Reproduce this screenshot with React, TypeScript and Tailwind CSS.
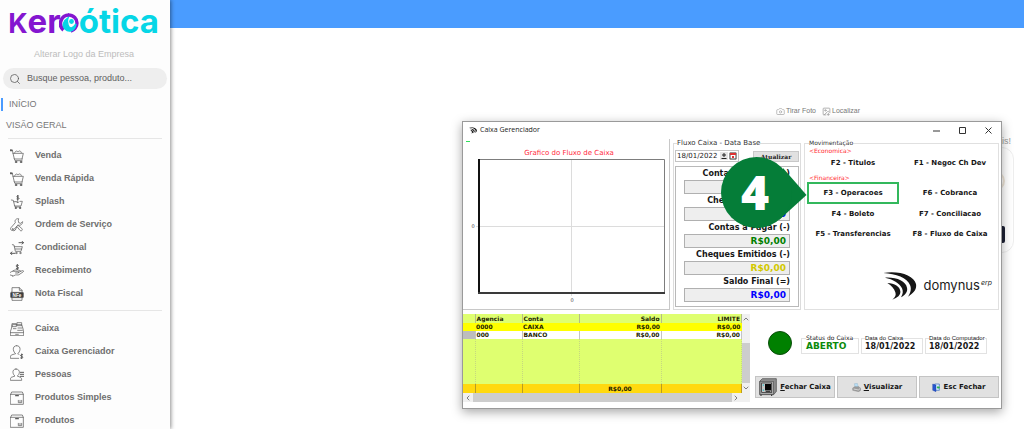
import React from 'react';
import { Camera, ChevronDown, ChevronLeft, ChevronRight, ChevronUp, ImageDown, Search } from 'lucide-react';

type IconProps = { children: React.ReactNode };

const LineIcon: React.FC<IconProps> = ({ children }) => (
    <svg viewBox="0 0 42 42" className="h-[14px] w-[14px] shrink-0" fill="none" stroke="#5c5c5c" strokeWidth="2.2" strokeLinecap="round" strokeLinejoin="round" aria-hidden="true">
        {children}
    </svg>
);

const CartIcon = () => (
    <LineIcon>
        <path d="M1 3l6 1 6 26h24M9 13h31l-4 17M13 30l2 5h21" />
        <path d="M14 12c1-6 7-8 10-3 3-5 9-4 10 2" />
        <circle cx="18" cy="39" r="2.4" fill="#4d4d4d" />
        <circle cx="33" cy="39" r="2.4" fill="#4d4d4d" />
        <path d="M1 4h5" strokeWidth="5" />
    </LineIcon>
);

const SplashIcon = () => (
    <LineIcon>
        <path d="M4 15l6 1 4 17h19l4-14h-6M11 20h8M14 33l2 3h16" />
        <path d="M26 3c-6-2-8 4-2 5s4 6-3 4M23 1v14" strokeWidth="3" />
        <path d="M23 17v6M19 20l4 4 4-4" />
        <circle cx="17" cy="39" r="2" fill="#4d4d4d" />
        <circle cx="30" cy="39" r="2" fill="#4d4d4d" />
    </LineIcon>
);

const ToolsIcon = () => (
    <LineIcon>
        <path d="M25 2c-7-1-12 5-9 12L3 29c-4 5 2 11 7 7l14-15c8 3 14-3 14-10l-6 5-6-2-1-6z" />
        <path d="M24 22l11 9c5 5-1 10-5 6l-9-11M20 27l-4 9-5 3-3-3" />
        <circle cx="8" cy="33" r="1" />
    </LineIcon>
);

const ConditionalIcon = () => (
    <LineIcon>
        <path d="M7 11l5 1 4 19h17l4-14H13M16 24h19" />
        <path d="M27 5h13M36 1l5 4-5 4M15 37H2M6 33l-5 4 5 4" strokeWidth="3" />
        <circle cx="19" cy="36" r="2" />
        <circle cx="31" cy="36" r="2" />
    </LineIcon>
);

const ReceiptIcon = () => (
    <LineIcon>
        <path d="M25 4c-7-3-9 4-3 5s5 7-3 5M22 1v16" strokeWidth="3" />
        <path d="M1 25c7-6 11-2 16-2h8c3 0 2 4-1 4h-7M25 25l12-5c4-1 5 2 2 4L27 32c-3 2-7 0-11 1L8 37M1 33l7 2M9 20c9-4 17-3 23 1" />
    </LineIcon>
);

const NfeIcon = () => (
    <LineIcon>
        <path d="M6 15V2h22l8 8v5M28 2v8h8M6 33v7h30v-7" />
        <rect x="2" y="16" width="38" height="16" rx="2" fill="#3c3c3c" />
        <text x="21" y="29" textAnchor="middle" fill="#fff" stroke="none" fontSize="14" fontWeight="700" fontFamily="Liberation Sans, sans-serif">NFe</text>
    </LineIcon>
);

const RegisterIcon = () => (
    <LineIcon>
        <path d="M4 20L7 8h28l4 12 2 12H1zM1 32v9h40v-9M17 37h8" />
        <rect x="7" y="5" width="12" height="9" />
        <path d="M22 2h13v9H22zM10 20h8M24 18h12M23 25h14" />
    </LineIcon>
);

const ManagerIcon = () => (
    <LineIcon>
        <path d="M20 2c-7 0-11 5-10 12 1 6 4 10 7 12L4 30c-2 2-3 5-3 10h25M20 2c7 0 11 5 10 12-1 6-4 10-7 12l4 2" />
        <path d="M38 29c-6-2-9 4-3 5s4 7-3 5M35 27v15" strokeWidth="3" />
    </LineIcon>
);

const PeopleIcon = () => (
    <LineIcon>
        <path d="M18 3c-7 0-10 5-9 11 1 5 3 8 6 10L4 28c-2 1-3 4-3 9h34c0-5-1-8-4-9l-9-4c3-2 5-5 6-10 1-6-3-11-10-11z" />
        <path d="M31 13h10M31 19h10M31 25h10" strokeWidth="3" />
    </LineIcon>
);

const BoxIcon = () => (
    <LineIcon>
        <path d="M2 10h38v30H2zM2 10l3-7h32l3 7" />
        <path d="M17 14h8" strokeWidth="4" />
        <path d="M25 28v7h10v-7M30 28v5" />
    </LineIcon>
);

const SALES_ITEMS = [
    { label: 'Venda', icon: CartIcon },
    { label: 'Venda Rápida', icon: CartIcon },
    { label: 'Splash', icon: SplashIcon },
    { label: 'Ordem de Serviço', icon: ToolsIcon },
    { label: 'Condicional', icon: ConditionalIcon },
    { label: 'Recebimento', icon: ReceiptIcon },
    { label: 'Nota Fiscal', icon: NfeIcon },
];

const REGISTER_ITEMS = [
    { label: 'Caixa', icon: RegisterIcon },
    { label: 'Caixa Gerenciador', icon: ManagerIcon },
    { label: 'Pessoas', icon: PeopleIcon },
    { label: 'Produtos Simples', icon: BoxIcon },
    { label: 'Produtos', icon: BoxIcon },
];

const TOTALS = [
    { label: 'Contas Receber (+)', color: 'text-[#0000ff]' },
    { label: 'Cheques Caixa (+)', color: 'text-[#0000ff]' },
    { label: 'Contas a Pagar (-)', color: 'text-[#008000]' },
    { label: 'Cheques Emitidos (-)', color: 'text-[#d2c800]' },
    { label: 'Saldo Final (=)', color: 'text-[#0000ff]' },
];

const NavList: React.FC<{ items: typeof SALES_ITEMS }> = ({ items }) => (
    <ul>
        {items.map(({ label, icon: Icon }) => (
            <li key={label}>
                <a href="#" className="flex h-[23px] items-center gap-[11px] pl-[10px] text-[9px] font-bold text-[#6e6e6e]">
                    <Icon />
                    {label}
                </a>
            </li>
        ))}
    </ul>
);

const Logo = () => (
    <div className="flex h-[42px] items-baseline justify-center pr-[3px] font-['Inter',sans-serif] leading-[42px] font-bold">
        <span className="text-[27px] text-[#8416d0]">K</span>
        <span className="text-[33px] text-[#8416d0]">er</span>
        <svg viewBox="0 0 20 20" className="-ml-[2px] h-5 w-5" role="img" aria-label="o">
            <path d="M4.500 17A8.500 8.500 0 0 1 10 2" fill="none" stroke="#8416d0" strokeWidth="3.600" />
            <path d="M9 2c6 0 9 4 9 8 0 4-3 7.500-6 8" fill="none" stroke="#8416d0" strokeWidth="3.400" />
            <path d="M9 5C4 8 3 13 6 16c4 4 10 2 11-5-3 5-7 5-8 1-1-3-1-5 0-7z" fill="#06d6e6" stroke="#06d6e6" strokeWidth="1.500" />
            <circle cx="12.500" cy="8.500" r="2.400" fill="#06d6e6" />
        </svg>
        <span className="text-[33px] text-[#06d6e6]">ótica</span>
    </div>
);

const Sidebar = () => (
    <aside className="z-10 w-[170px] shrink-0 overflow-hidden bg-[#fdfdfd] shadow-[1px_0_4px_rgba(0,0,0,0.45)]">
        <Logo />
        <a href="#" className="mr-[2px] block pt-[7px] text-center text-[9px] leading-[10px] text-[#bcbcbc]">Alterar Logo da Empresa</a>
        <label className="mx-[3px] mt-[9px] flex h-[21px] items-center gap-[6px] rounded-full bg-[#eeeeee] pl-[6px]">
            <Search className="h-3 w-3 shrink-0 text-[#555]" strokeWidth={1.5} />
            <input type="text" aria-label="Busca" placeholder="Busque pessoa, produto..." className="w-full min-w-0 text-[9px] outline-none placeholder:text-[#606060]" />
        </label>
        <nav>
            <a href="#" className="mt-[9px] ml-px flex h-[13px] items-center border-l-2 border-[#4a9bff] pl-[6px] text-[9px] text-[#777]">INÍCIO</a>
            <a href="#" className="mt-[8px] flex h-[13px] items-center pl-[6px] text-[9px] text-[#777]">VISÃO GERAL</a>
            <hr className="mx-2 mt-[6px] mb-[5px] border-[#e6e6e6]" />
            <NavList items={SALES_ITEMS} />
            <hr className="mx-2 mt-[5px] mb-[6px] border-[#e6e6e6]" />
            <NavList items={REGISTER_ITEMS} />
        </nav>
    </aside>
);

const DomynusMark: React.FC<{ className: string }> = ({ className }) => (
    <svg viewBox="0 0 100 84" className={className} fill="#161616" aria-hidden="true">
        <path d="M0 3C46-5 92 10 98 36c3 16-8 28-24 38 8-12 11-24 6-35C72 18 38 5 0 3z" />
        <path d="M5 17c34-2 62 10 66 30 3 13-6 22-18 29 6-10 7-18 3-27C49 33 29 22 5 17z" />
        <path d="M12 33c22 1 38 11 39 25 1 12-8 19-24 25 9-8 12-14 9-22-4-12-11-20-24-28z" />
    </svg>
);

const TitleBar = () => (
    <div className="flex h-[17px] items-center pl-[6px] font-['Open_Sans',sans-serif] text-[7px] text-[#222]">
        <DomynusMark className="h-[7px] w-2" />
        <span className="ml-[3px] flex-1">Caixa Gerenciador</span>
        <button aria-label="Minimizar" className="flex w-[26px] justify-center">
            <svg className="h-[7px] w-[7px]" viewBox="0 0 7 7" stroke="#333"><path d="M0 4h7" /></svg>
        </button>
        <button aria-label="Maximizar" className="flex w-[26px] justify-center">
            <svg className="h-[7px] w-[7px]" viewBox="0 0 7 7" stroke="#333" fill="none"><path d="M.5.5h6v6h-6z" /></svg>
        </button>
        <button aria-label="Fechar" className="flex w-[26px] justify-center">
            <svg className="h-[7px] w-[7px]" viewBox="0 0 7 7" stroke="#333"><path d="M.5.5l6 6M6.500.5l-6 6" /></svg>
        </button>
    </div>
);

const CashFlowChart = () => (
    <div className="w-[207px] shrink-0 border-r border-b border-[#c8c8c8]">
        <svg viewBox="0 0 206 170" className="block w-full" fontFamily="DejaVu Sans, sans-serif">
            <path d="M3 2.500h4" stroke="#2fe05a" />
            <text x="106" y="16" fontSize="7" textAnchor="middle" fill="#ff2a3c">Grafico do Fluxo de Caixa</text>
            <path d="M108.500 21v136M13 87.500h188" stroke="#dcdcdc" />
            <path d="M16 20.500h185.500V153" stroke="#7d7d7d" fill="none" />
            <path d="M16 20v134" stroke="#111" strokeWidth="2" />
            <path d="M15 154h187" stroke="#3a3a3a" strokeWidth="2" />
            <text x="10" y="89" fontSize="5" textAnchor="middle" fill="#444">0</text>
            <text x="109" y="163" fontSize="5" textAnchor="middle" fill="#444">0</text>
        </svg>
    </div>
);

const BalancePanel = () => (
    <fieldset className="w-32 shrink-0 border border-[#dcdcdc] px-px pb-px">
        <legend className="ml-[2px] text-[7px] leading-[8px] whitespace-nowrap text-[#333]">Fluxo Caixa - Data Base</legend>
        <div className="flex items-center justify-between pt-[3px]">
            <div className="flex h-3 w-[64px] items-center border border-[#c4c4c4]">
                <input aria-label="Data base" defaultValue="18/01/2022" className="w-[44px] pl-px text-[7px] leading-[10px] text-[#222] outline-none" />
                <button aria-label="Alterar data" className="flex h-[8px] w-[8px] items-center justify-center bg-[#e4e4e4]">
                    <svg viewBox="0 0 8 8" className="h-2 w-2" stroke="#222"><path d="M4 1v4M2 3h4M1.500 6.500h5" /></svg>
                </button>
                <button aria-label="Abrir calendário" className="ml-px flex h-[8px] w-[8px] items-center justify-center bg-[#e4e4e4]">
                    <svg viewBox="0 0 8 8" className="h-2 w-2"><path d="M1 1h6v6H1z" fill="#fff" stroke="#444" /><path d="M1 1h6v2H1z" fill="#d33" /><path d="M3 4h2v2H3z" fill="#d33" /></svg>
                </button>
            </div>
            <button className="h-[11px] w-[46px] border border-[#c8c8c8] bg-[#e1e1e1] font-['DejaVu_Serif',serif] text-[6px] leading-[9px] font-bold text-[#222]">Atualizar</button>
        </div>
        <dl className="mt-1 border border-[#b9b9b9] pr-2 pb-1 pl-2 text-right font-bold">
            {TOTALS.map(({ label, color }) => (
                <React.Fragment key={label}>
                    <dt className="h-[13px] text-[8px] leading-[13px] whitespace-nowrap text-[#151515]">{label}</dt>
                    <dd className={`h-[14px] border border-[#b0b0b0] bg-[#eeeeee] pr-[3px] text-[9px] leading-[12px] ${color}`}>R$0,00</dd>
                </React.Fragment>
            ))}
        </dl>
    </fieldset>
);

const MovementPanel = () => (
    <fieldset className="mr-[2px] min-w-0 flex-1 border border-[#e0e0e0] pl-[2px]">
        <legend className="ml-[2px] text-[6px] leading-[8px] text-[#333]">Movimentação</legend>
        <p className="pl-[2px] text-[6px] leading-[7px] text-[#ff1f2f]">&lt;Economica&gt;</p>
        <div className="grid grid-cols-[92px_1fr] text-[7px] font-bold text-[#151515]">
            <button className="h-[18px]">F2 - Titulos</button>
            <button className="h-[18px] pl-[3px]">F1 - Negoc Ch Dev</button>
        </div>
        <p className="pt-[2px] pl-[2px] text-[6px] leading-[8px] text-[#ff1f2f]">&lt;Financeira&gt;</p>
        <div className="grid grid-cols-[92px_1fr] text-[7px] font-bold whitespace-nowrap text-[#151515]">
            <button className="h-[22px] border-2 border-[#33b85c]">F3 - Operacoes</button>
            <button className="h-[22px] pl-[3px]">F6 - Cobranca</button>
            <button className="h-5">F4 - Boleto</button>
            <button className="h-5 pl-[3px]">F7 - Conciliacao</button>
            <button className="h-5">F5 - Transferencias</button>
            <button className="h-5 pl-[3px]">F8 - Fluxo de Caixa</button>
        </div>
        <div className="flex items-center justify-end pt-[28px] pr-[6px] pb-2 font-['Inter',sans-serif] text-[#1b1b1b]">
            <DomynusMark className="h-[28px] w-[34px]" />
            <span className="ml-[6px] text-[13px]">domynus</span>
            <sup className="ml-px text-[7px] italic">erp</sup>
        </div>
    </fieldset>
);

const AccountsTable = () => (
    <div className="grid w-[287px] shrink-0 grid-cols-[1fr_8px] bg-[#f0f0f0]">
        <table className="w-full table-fixed border-collapse bg-[#dfff70] text-[6px] leading-[8px] font-bold text-[#1c1c00]">
            <colgroup>
                <col className="w-3" />
                <col className="w-[47px]" />
                <col className="w-[57px]" />
                <col className="w-[82px]" />
                <col />
            </colgroup>
            <thead>
                <tr className="h-[9px] [&>th]:border-r [&>th]:border-[#b5bd85] [&>th]:px-px">
                    <th></th>
                    <th className="text-left">Agencia</th>
                    <th className="text-left">Conta</th>
                    <th className="text-right">Saldo</th>
                    <th className="text-right">LIMITE</th>
                </tr>
            </thead>
            <tbody>
                <tr className="h-2 bg-[#ffff00] [&>td]:px-px">
                    <td></td>
                    <td>0000</td>
                    <td>CAIXA</td>
                    <td className="text-right">R$0,00</td>
                    <td className="text-right">R$0,00</td>
                </tr>
                <tr className="h-2 bg-white [&>td]:border-r [&>td]:border-[#c4c4c4] [&>td]:px-px">
                    <td className="bg-[#bdbdbd]"></td>
                    <td>000</td>
                    <td>BANCO</td>
                    <td className="text-right">R$0,00</td>
                    <td className="text-right">R$0,00</td>
                </tr>
                <tr className="h-[45px] [&>td]:border-r [&>td]:border-dotted [&>td]:border-[#c6d880]">
                    <td></td>
                    <td></td>
                    <td></td>
                    <td></td>
                    <td></td>
                </tr>
            </tbody>
            <tfoot>
                <tr className="h-[9px] bg-[#ffd90f] [&>td]:border-r [&>td]:border-[#b99d20]">
                    <td></td>
                    <td></td>
                    <td></td>
                    <td className="text-center">R$0,00</td>
                    <td></td>
                </tr>
            </tfoot>
        </table>
        <div className="flex flex-col items-center text-[#444]">
            <ChevronUp className="my-px h-2 w-2" />
            <div className="mt-[19px] w-full flex-1 bg-[#cdcdcd]"></div>
            <ChevronDown className="my-px h-2 w-2" />
        </div>
        <div className="flex h-[9px] items-center text-[#444]">
            <ChevronLeft className="mx-px h-2 w-2" />
            <div className="h-full flex-1 bg-[#cdcdcd]"></div>
            <div className="flex h-full w-[10px] items-center bg-[#f0f0f0]"><ChevronRight className="h-2 w-2" /></div>
        </div>
    </div>
);

const StatusRow = () => (
    <div className="flex items-start pt-[17px] pl-[13px] text-[#161616]">
        <span className="h-6 w-6 rounded-full border border-[#0b4d0b] bg-[#008000]"></span>
        <div className="ml-[9px] flex flex-1 gap-[2px] pt-[3px] font-bold">
            <fieldset className="h-[20px] w-[58px] border border-[#e2e2e2] pl-1">
                <legend className="text-[6px] leading-[8px] font-normal whitespace-nowrap">Status do Caixa</legend>
                <output className="block text-[9px] leading-[9px] text-[#0a8a0a]">ABERTO</output>
            </fieldset>
            <fieldset className="h-[20px] w-[62px] border border-[#e2e2e2] pl-[3px]">
                <legend className="font-['Liberation_Sans',sans-serif] text-[6px] leading-[8px] font-normal whitespace-nowrap">Data do Caixa</legend>
                <time className="block text-[8px] leading-[9px]">18/01/2022</time>
            </fieldset>
            <fieldset className="h-[20px] w-[62px] border border-[#e2e2e2] pl-[3px]">
                <legend className="font-['Liberation_Sans',sans-serif] text-[6px] leading-[8px] font-normal whitespace-nowrap">Data do Computador</legend>
                <time className="block text-[8px] leading-[9px]">18/01/2022</time>
            </fieldset>
        </div>
    </div>
);

const ActionButton: React.FC<{ children: React.ReactNode }> = ({ children }) => (
    <button className="flex h-[22px] w-20 items-center justify-center gap-[3px] border border-[#c4c4c4] bg-[#e1e1e1] text-[7px] font-bold whitespace-nowrap text-[#151515]">
        {children}
    </button>
);

const Actions = () => (
    <div className="mt-[21px] flex gap-[2px]">
        <ActionButton>
            <svg viewBox="0 0 54 54" className="h-[18px] w-[18px]" aria-hidden="true">
                <path d="M2 10L10 2h42v38l-8 10H2z" fill="#8c8c8c" stroke="#444" strokeWidth="2" />
                <rect x="3" y="10" width="40" height="39" fill="#a9a9a9" stroke="#555" strokeWidth="2" />
                <rect x="8" y="15" width="30" height="28" fill="#c4c4c4" stroke="#222" strokeWidth="2" />
                <rect x="18" y="18" width="18" height="19" fill="#050505" />
                <path d="M13 19v5M13 34v5" stroke="#35c8d2" strokeWidth="3" />
                <path d="M6 50v4M38 50v4M20 40h14" stroke="#222" strokeWidth="3" />
            </svg>
            <span><u>F</u>echar Caixa</span>
        </ActionButton>
        <ActionButton>
            <svg viewBox="0 0 27 27" className="h-[9px] w-[9px]" aria-hidden="true">
                <path d="M7 2l9-1 3 12H9z" fill="#b7dcf4" stroke="#88a9bb" />
                <path d="M2 15l6-4h13l5 5v6l-6 4-18-4z" fill="#9a9a9a" stroke="#777" />
                <path d="M5 18l14 3 5-4" stroke="#eee" fill="none" strokeWidth="2" />
            </svg>
            <span><u>V</u>isualizar</span>
        </ActionButton>
        <ActionButton>
            <svg viewBox="0 0 24 27" className="h-[9px] w-[8px]" aria-hidden="true">
                <path d="M8 3h14v19H8z" fill="#d7ecff" stroke="#3568bd" strokeWidth="2" />
                <path d="M2 3l10 3v20L2 22z" fill="#2856cf" stroke="#173a99" />
                <path d="M14 13l5-5v3h4v5h-4v3z" fill="#2bb24c" />
            </svg>
            <span>Esc Fechar</span>
        </ActionButton>
    </div>
);

const StepMarker = () => (
    <svg viewBox="0 0 86 72" className="absolute top-[35px] left-[258px] h-[72px] w-[86px]">
        <path d="M62 11L85.500 38 58 63z" fill="#057d38" />
        <circle cx="35.500" cy="35.500" r="35.500" fill="#057d38" />
        <text x="34" y="53" textAnchor="middle" fontFamily="Open Sans, sans-serif" fontWeight="800" fontSize="48" fill="#fff">4</text>
    </svg>
);

const CashManagerWindow = () => (
    <section className="absolute top-[93px] left-[292px] w-[540px] border border-[#9a9a9a] bg-white pb-[6px] font-['DejaVu_Sans',Verdana,sans-serif] shadow-[0_3px_10px_rgba(0,0,0,0.35)]">
        <TitleBar />
        <div className="flex gap-[3px]">
            <CashFlowChart />
            <BalancePanel />
            <MovementPanel />
        </div>
        <div className="mt-1 flex gap-[5px]">
            <AccountsTable />
            <div className="min-w-0 flex-1">
                <StatusRow />
                <Actions />
            </div>
        </div>
        <StepMarker />
    </section>
);

const App = () => (
    <div className="flex h-screen overflow-hidden bg-white font-['Liberation_Sans',Arial,sans-serif]">
        <Sidebar />
        <div className="flex min-w-0 flex-1 flex-col">
            <header className="h-7 shrink-0 bg-[#4a9cff]"></header>
            <main className="relative flex-1">
                <div className="flex justify-end gap-[6px] pt-[78px] pr-[164px] font-['Liberation_Sans',sans-serif] text-[7px] leading-[10px] text-[#777]">
                    <button className="flex items-center gap-px"><Camera className="h-[9px] w-[9px] text-[#aaa]" />Tirar Foto</button>
                    <button className="flex items-center gap-px"><ImageDown className="h-[9px] w-[9px] text-[#999]" />Localizar</button>
                </div>
                <div className="flex flex-col items-end pt-[19px] pr-[10px]">
                    <p className="pr-[3px] text-[9px] leading-[12px] text-[#999]">Mais!</p>
                    <div className="h-[106px] w-[200px] rounded-xl border border-[#eeeeee] pt-[23px] pr-[8px]">
                        <div className="ml-auto h-[20px] w-5 rounded-full border-2 border-[#efe6d8]"></div>
                        <div className="mt-[35px] ml-auto h-[17px] w-10 rounded-xs bg-[#1c2033]"></div>
                    </div>
                </div>
                <CashManagerWindow />
            </main>
        </div>
    </div>
);

export default App;
